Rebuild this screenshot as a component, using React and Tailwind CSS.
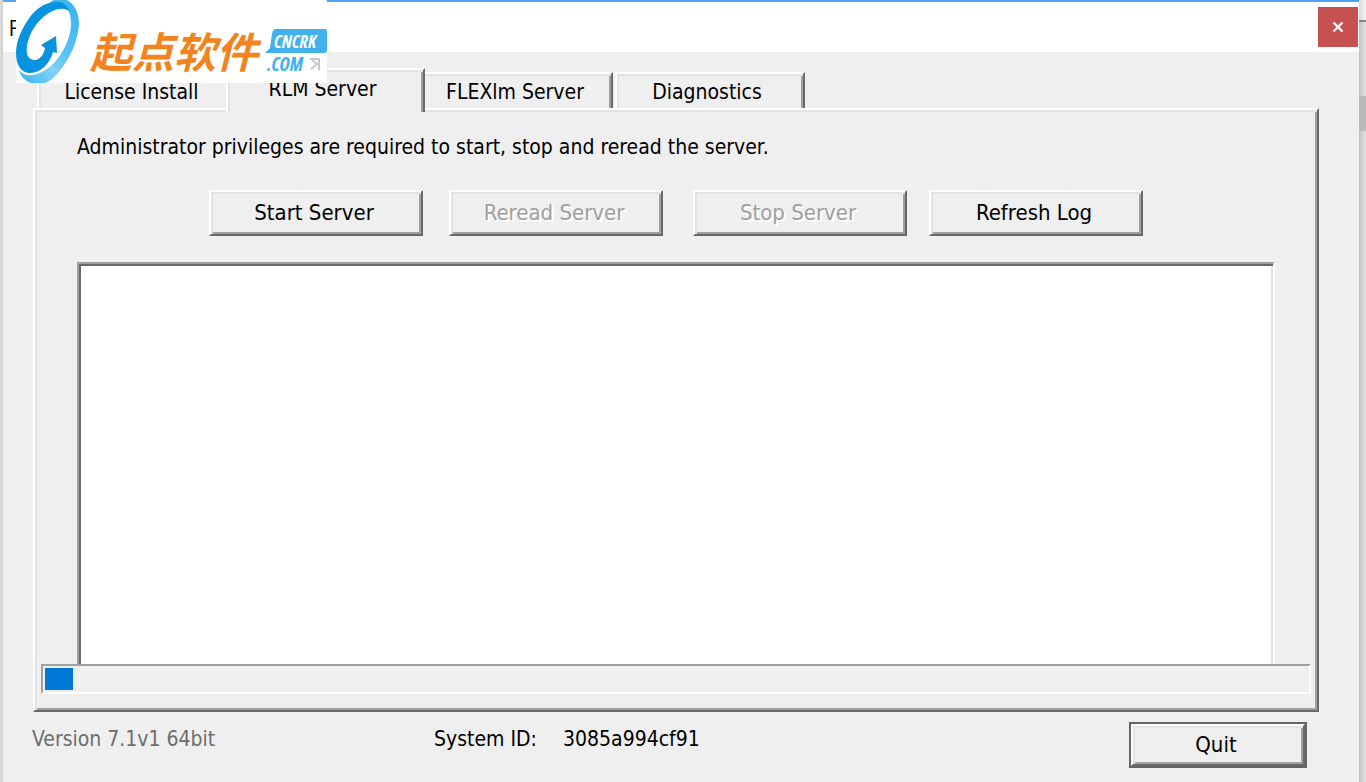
import React from "react";

const raised =
  "border-2 border-t-white border-l-white border-r-[#696969] border-b-[#696969] shadow-[inset_2px_2px_#e3e3e3,inset_-2px_-2px_#a0a0a0]";

const rightEdge = "border-r-2 border-r-[#696969]";

const tabs = [
  {
    name: "License Install",
    style: "h-9 w-[189px] border-l-2 pt-0.5 pr-0.5 shadow-[inset_2px_2px_#e3e3e3]",
  },
  {
    name: "RLM Server",
    active: true,
    style: `relative z-10 -mb-1 h-11 w-[199px] border-l-2 pb-1 pr-1.5 shadow-[inset_2px_2px_#e3e3e3,inset_-2px_0_#a0a0a0] ${rightEdge}`,
  },
  {
    name: "FLEXlm Server",
    style: `h-9 w-[188px] pt-0.5 pr-1.5 shadow-[inset_0_2px_#e3e3e3,inset_-2px_0_#a0a0a0] ${rightEdge}`,
  },
  {
    name: "Diagnostics",
    style: `ml-0.5 h-9 w-[190px] border-l-2 pt-0.5 pr-1.5 shadow-[inset_2px_2px_#e3e3e3,inset_-2px_0_#a0a0a0] ${rightEdge}`,
  },
];

function Tab({ tab }) {
  return (
    <button
      type="button"
      role="tab"
      aria-selected={!!tab.active}
      className={`flex items-center justify-center whitespace-nowrap border-t-2 border-t-white border-l-white bg-[#efefef] ${tab.style}`}
    >
      {tab.name}
    </button>
  );
}

function PushButton({ children, disabled, className = "" }) {
  return (
    <button
      type="button"
      disabled={disabled}
      className={`h-[46px] w-[214px] shrink-0 whitespace-nowrap bg-[#efefef] pr-1 text-[22px] disabled:text-[#a0a0a0] disabled:[text-shadow:2px_2px_#fff] ${raised} ${className}`}
    >
      {children}
    </button>
  );
}

function Logo() {
  return (
    <div className="absolute left-4 top-0 z-20 h-[83px] w-[311px] overflow-hidden bg-white">
      <svg viewBox="0 0 311 83" className="absolute inset-0 h-full w-full">
        <defs>
          <linearGradient id="ring" x1="1" y1="0" x2="0.2" y2="1">
            <stop offset="0" stopColor="#35b2ee" />
            <stop offset="0.5" stopColor="#58c4f5" />
            <stop offset="0.72" stopColor="#83d2fa" />
            <stop offset="1" stopColor="#48bbf1" />
          </linearGradient>
        </defs>
        <path
          fill="url(#ring)"
          d="M34 2C40 -2 48 -3 54 2C60 7 63 15 63 24C62 41 54 59 42 73C34 83 25 86 15 83C9 81 5 77 3 70C6 74 11 76 16 75C24 74 31 70 38 63C48 52 55 37 55 24C55 18 54 12 51 8Z"
        />
        <path
          fill="#0793df"
          d="M54 12C51 4 45 1 38 2C28 3 20 9 14 17C6 28 0 41 0 53C0 65 5 73 14 73C25 73 34 63 37 52L41 53L40 36L25 45L29 48C28 54 24 60 19 60C11 60 9 52 12 41C16 27 27 14 39 10C45 8 50 8 54 12Z"
        />
        <path fill="#41b1ed" d="M260 29H309Q311 29 311 32V50Q311 53 308 53H249L254 48L256 34Q257 29 260 29Z" />
        <path
          fill="none"
          stroke="#c8c8c8"
          strokeWidth="2"
          d="M294 59H303V70M296 60L301 64L295 69"
        />
      </svg>
      <span className="absolute left-[74px] top-[24px] whitespace-nowrap font-['Noto_Sans_CJK_SC',sans-serif] text-[42px] font-bold italic leading-[52px] text-[#f28420]">
        起点软件
      </span>
      <span className="absolute left-[258px] top-[33px] font-['Open_Sans',sans-serif] text-[18px] font-bold italic leading-4 text-white">
        CNCRK
      </span>
      <span className="absolute left-[251px] top-[56px] font-['Open_Sans',sans-serif] text-[19px] font-bold italic leading-4 text-[#41b1ed]">
        .COM
      </span>
    </div>
  );
}

function TitleBar() {
  return (
    <header className="flex h-[52px] items-center justify-between border-t-2 border-[#4fa3f7] bg-white pl-1.5 pr-px">
      <h1 className="font-['Open_Sans',sans-serif] text-[22px] leading-none">F</h1>
      <button
        type="button"
        aria-label="Close"
        className="flex size-10 items-center justify-center bg-[#c75050]"
      >
        <svg viewBox="0 0 12 10" width="12" height="10" stroke="#fff" strokeWidth="2.2">
          <path d="M1.5 0.5L10.5 9.5M10.5 0.5L1.5 9.5" />
        </svg>
      </button>
    </header>
  );
}

export default function App() {
  return (
    <div className="relative flex min-h-screen bg-[#dcdcdc] font-['DejaVu_Sans_Condensed','DejaVu_Sans',sans-serif] text-[21px] leading-7 text-black [font-stretch:condensed]">
      <Logo />

      {/* Left window edge */}
      <div className="w-[3px] bg-linear-to-r from-[#dedede] to-[#cfcfcf]" />

      <div className="flex min-w-0 flex-1 flex-col bg-[#efefef]">
        <TitleBar />

        <main className="flex flex-1 flex-col pl-[30px] pr-10 pt-4">
          {/* Tabs */}
          <div role="tablist" className="flex items-end pl-1">
            {tabs.map((tab) => (
              <Tab key={tab.name} tab={tab} />
            ))}
          </div>

          {/* RLM Server page */}
          <section role="tabpanel" className={`flex flex-1 flex-col px-1.5 pb-4 pt-[23px] ${raised}`}>
            <p className="whitespace-nowrap pl-9">
              Administrator privileges are required to start, stop and reread the server.
            </p>

            <div className="mt-[29px] flex justify-center">
              <PushButton>Start Server</PushButton>
              <PushButton disabled className="ml-[26px]">Reread Server</PushButton>
              <PushButton disabled className="ml-[30px]">Stop Server</PushButton>
              <PushButton className="ml-[22px]">Refresh Log</PushButton>
            </div>

            <textarea
              readOnly
              aria-label="Server log"
              className="ml-9 mr-9 mt-[26px] flex-1 resize-none border-2 border-b-0 border-l-[#a0a0a0] border-r-white border-t-[#a0a0a0] bg-white shadow-[inset_2px_2px_#696969,inset_-2px_0_#e3e3e3] outline-none"
            />

            <div
              role="progressbar"
              aria-label="Progress"
              aria-valuenow={2}
              className="h-[30px] border-2 border-b-white border-l-[#a0a0a0] border-r-white border-t-[#a0a0a0] p-0.5"
            >
              <div className="h-[22px] w-7 bg-[#0078d7]" />
            </div>
          </section>
        </main>

        <footer className="flex h-[70px] items-start pl-[29px] pr-[52px] pt-2.5">
          <span className="mt-[3px] w-[402px] text-[#6d6d6d]">Version 7.1v1 64bit</span>
          <span className="mt-[3px] w-[129px]">System ID:</span>
          <span className="mt-[3px]">3085a994cf91</span>
          <div className="ml-auto border-2 border-[#646464]">
            <button
              type="button"
              className={`block h-[42px] w-[174px] bg-[#efefef] pr-1 text-[22px] ${raised}`}
            >
              Quit
            </button>
          </div>
        </footer>
      </div>

      {/* Shadow and the window behind */}
      <div className="flex w-[7px] flex-col bg-linear-to-r from-[#c2c2c2] to-[#e2e4e6]">
        <div className="h-5 bg-linear-to-r from-[#d8d8d8] to-[#f4f4f4]" />
        <div className="h-0.5 bg-[#858585]" />
        <div className="h-[74px]" />
        <div className="h-[35px] bg-[#b7b9bb]" />
      </div>
    </div>
  );
}
